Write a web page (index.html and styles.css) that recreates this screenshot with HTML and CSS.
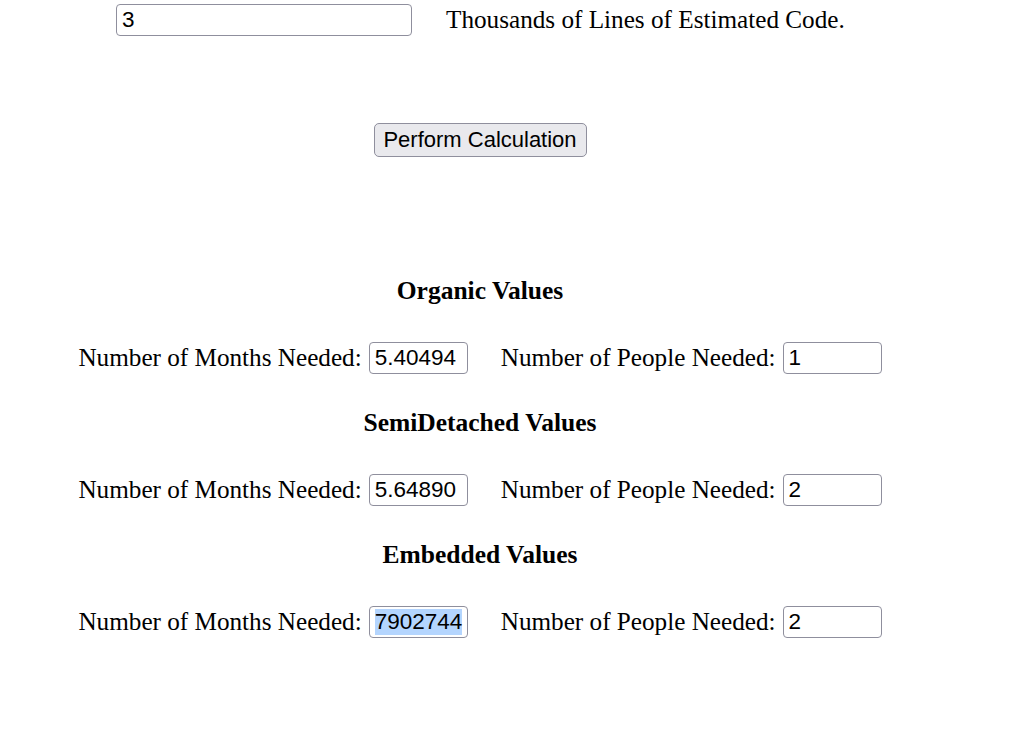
FILE: index.html
```html
<!DOCTYPE html>
<html lang="en">
<head>
    <meta charset="UTF-8">
    <title>COCOMO Estimate</title>
    <link rel="stylesheet" href="styles.css">
</head>
<body>
<div class="page">
    <div class="kloc">
        <input type="text" class="field wide" value="3">
        <span class="kloc-label">Thousands of Lines of Estimated Code.</span>
    </div>

    <div class="action">
        <button type="button" class="calc">Perform Calculation</button>
    </div>

    <div class="results">
        <h3>Organic Values</h3>
        <div class="row">
            <label>Number of Months Needed:</label>
            <input type="text" class="field small" value="5.40494">
            <label class="second">Number of People Needed:</label>
            <input type="text" class="field small" value="1">
        </div>

        <h3>SemiDetached Values</h3>
        <div class="row">
            <label>Number of Months Needed:</label>
            <input type="text" class="field small" value="5.64890">
            <label class="second">Number of People Needed:</label>
            <input type="text" class="field small" value="2">
        </div>

        <h3>Embedded Values</h3>
        <div class="row">
            <label>Number of Months Needed:</label>
            <div class="field small fake"><span class="sel">7902744</span></div>
            <label class="second">Number of People Needed:</label>
            <input type="text" class="field small" value="2">
        </div>
    </div>
</div>
</body>
</html>
```

FILE: styles.css
```css
* {
    margin: 0;
    padding: 0;
    box-sizing: border-box;
}

body {
    font-family: "Liberation Serif", "Times New Roman", serif;
    font-size: 25.2px;
    color: #000;
    background: #fff;
}

.page {
    width: 960px;
}

.field {
    font-family: "Liberation Sans", Arial, sans-serif;
    font-size: 22.5px;
    color: #000;
    height: 32px;
    padding: 0 5px;
    border: 1.5px solid #8f8f9d;
    border-radius: 4px;
    background: #fff;
    outline: none;
}

.wide {
    width: 296px;
}

.small {
    width: 99px;
}

.fake {
    display: flex;
    align-items: center;
    overflow: hidden;
    white-space: nowrap;
}

.fake .sel {
    background: #b4d5fe;
    line-height: 26px;
}

.kloc {
    display: flex;
    align-items: center;
    padding: 4px 0 0 116px;
}

.kloc-label {
    margin-left: 34px;
}

.action {
    display: flex;
    justify-content: center;
    margin-top: 87px;
}

.calc {
    font-family: "Liberation Sans", Arial, sans-serif;
    font-size: 22px;
    color: #000;
    width: 213px;
    height: 34px;
    background: #e9e9ed;
    border: 1.5px solid #8f8f9d;
    border-radius: 5px;
}

.results {
    margin-top: 120px;
}

.results h3 {
    font-size: 25.5px;
    font-weight: bold;
    text-align: center;
    line-height: 28px;
}

.row {
    display: flex;
    align-items: center;
    justify-content: center;
    margin: 37px 0 35px;
}

.row label {
    margin-right: 7px;
}

.row .second {
    margin-left: 33px;
}
```
